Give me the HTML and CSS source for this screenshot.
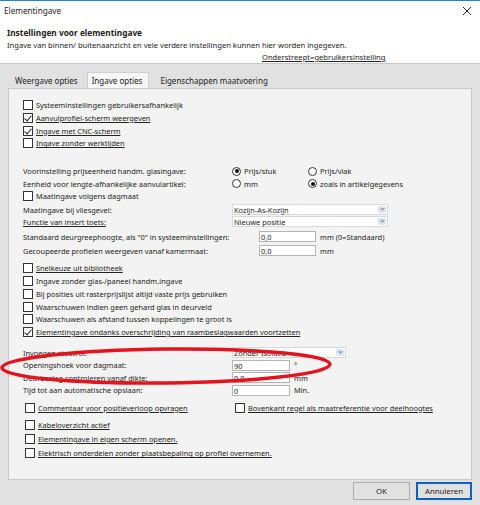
FILE: index.html
```html
<!DOCTYPE html>
<html lang="nl">

<head>
    <meta charset="UTF-8" />
    <title>Elementingave</title>
    <link rel="stylesheet" href="styles.css">
</head>

<body>
    <div class="dialog">
        <div class="titlebar">
            <span class="title">Elementingave</span>
            <svg class="close" width="10" height="10" viewBox="0 0 10 10">
                <path d="M1 1 L9 9 M9 1 L1 9" stroke="#222" stroke-width="1" fill="none" />
            </svg>
        </div>

        <div class="header">
            <div class="h-title">Instellingen voor elementingave</div>
            <div class="h-sub">Ingave van binnen/ buitenaanzicht en vele verdere instellingen kunnen hier worden ingegeven.</div>
            <div class="h-note"><span class="u">Onderstreept=gebruikersinstelling</span></div>
        </div>

        <div class="main">
            <div class="tabs">
                <div class="tab">Weergave opties</div>
                <div class="tab active">Ingave opties</div>
                <div class="tab">Eigenschappen maatvoering</div>
            </div>

            <div class="panel">
                <div class="group g1">
                    <label class="row"><span class="cb"></span>Systeeminstellingen gebruikersafhankelijk</label>
                    <label class="row"><span class="cb on"></span><span class="u">Aanvulprofiel-scherm weergeven</span></label>
                    <label class="row"><span class="cb on"></span><span class="u">Ingave met CNC-scherm</span></label>
                    <label class="row"><span class="cb"></span><span class="u">Ingave zonder werktijden</span></label>
                </div>

                <div class="group g2">
                    <div class="row">
                        <span class="lbl">Voorinstelling prijseenheid handm. glasingave:</span>
                        <span class="opt"><span class="rb on"></span>Prijs/stuk</span>
                        <span class="opt"><span class="rb"></span>Prijs/vlak</span>
                    </div>
                    <div class="row">
                        <span class="lbl">Eenheid voor lengte-afhankelijke aanvulartikel:</span>
                        <span class="opt"><span class="rb"></span>mm</span>
                        <span class="opt"><span class="rb on"></span>zoals in artikelgegevens</span>
                    </div>
                    <label class="row"><span class="cb"></span>Maatingave volgens dagmaat</label>
                    <div class="row sel-row first">
                        <span class="lbl">Maatingave bij vliesgevel:</span>
                        <span class="select wide">Kozijn-As-Kozijn<span class="arrow"></span></span>
                    </div>
                    <div class="row sel-row">
                        <span class="lbl u">Functie van insert toets:</span>
                        <span class="select wide">Nieuwe positie<span class="arrow"></span></span>
                    </div>
                </div>

                <div class="group g3">
                    <div class="row field">
                        <span class="lbl long">Standaard deurgreephoogte, als "0" in systeeminstellingen:</span>
                        <span class="input">0,0</span>
                        <span class="unit">mm (0=Standaard)</span>
                    </div>
                    <div class="row field">
                        <span class="lbl long">Gecoupeerde profielen weergeven vanaf kamermaat:</span>
                        <span class="input">0,0</span>
                        <span class="unit">mm</span>
                    </div>
                </div>

                <div class="group g4">
                    <label class="row"><span class="cb"></span><span class="u">Snelkeuze uit bibliotheek</span></label>
                    <label class="row"><span class="cb"></span>Ingave zonder glas-/paneel handm.ingave</label>
                    <label class="row"><span class="cb"></span>Bij posities uit rasterprijslijst altijd vaste prijs gebruiken</label>
                    <label class="row"><span class="cb"></span>Waarschuwen indien geen gehard glas in deurveld</label>
                    <label class="row"><span class="cb"></span>Waarschuwen als afstand tussen koppelingen te groot is</label>
                    <label class="row"><span class="cb on"></span><span class="u">Elementingave ondanks overschrijding van raambeslagwaarden voortzetten</span></label>
                </div>

                <div class="group g5">
                    <div class="row">
                        <span class="lbl">Invoegen stootrol:</span>
                        <span class="select mid">Zonder Isolatie<span class="arrow"></span></span>
                    </div>
                    <div class="row">
                        <span class="lbl">Openingshoek voor dagmaat:</span>
                        <span class="input short">90</span>
                        <span class="unit">°</span>
                    </div>
                    <div class="row">
                        <span class="lbl">Deurbeslag controleren vanaf dikte:</span>
                        <span class="input short">0,0</span>
                        <span class="unit">mm</span>
                    </div>
                    <div class="row">
                        <span class="lbl">Tijd tot aan automatische opslaan:</span>
                        <span class="input short">0</span>
                        <span class="unit">Min.</span>
                    </div>
                </div>

                <div class="group g6">
                    <div class="row two">
                        <label class="col"><span class="cb"></span><span class="u">Commentaar voor positieverloop opvragen</span></label>
                        <label class="col"><span class="cb"></span><span class="u">Bovenkant regel als maatreferentie voor deelhoogtes</span></label>
                    </div>
                    <label class="row"><span class="cb"></span><span class="u">Kabeloverzicht actief</span></label>
                    <label class="row"><span class="cb"></span><span class="u">Elementingave in eigen scherm openen.</span></label>
                    <label class="row"><span class="cb"></span><span class="u">Elektrisch onderdelen zonder plaatsbepaling op profiel overnemen.</span></label>
                </div>
            </div>

            <div class="buttons">
                <button class="btn">OK</button>
                <button class="btn default">Annuleren</button>
            </div>
        </div>

        <!-- rode markering -->
        <svg class="mark" width="340" height="50" viewBox="0 0 340 50">
            <ellipse cx="166" cy="24" rx="164" ry="17" fill="none" stroke="#e3141d" stroke-width="3.5" transform="rotate(-0.6 166 24)" />
        </svg>
    </div>
</body>

</html>
```

FILE: styles.css
```css
* {
    box-sizing: border-box;
}

body {
    margin: 0;
    font-family: 'Noto Sans', sans-serif;
    font-size: 7.4px;
    color: #222222;
}

.dialog {
    position: relative;
    width: 480px;
    height: 505px;
    overflow: hidden;
    background-color: #e1e1e1;
}

.u {
    text-decoration: underline;
}

/* title bar */
.titlebar {
    height: 22px;
    background-color: #ffffff;
    border-top: 1px solid #2a7fd6;
    display: flex;
    align-items: center;
    justify-content: space-between;
    padding: 0 8px 2px 4px;
    font-size: 8.2px;
}

/* header */
.header {
    height: 42px;
    background-color: #ffffff;
    border-bottom: 1px solid #c8c8c8;
    padding: 5px 0 0 7px;
}

.h-title {
    font-weight: 700;
    font-size: 8.3px;
    height: 12px;
    line-height: 12px;
}

.h-sub {
    font-size: 7.6px;
    height: 12px;
    line-height: 13px;
}

.h-note {
    padding-left: 255px;
    height: 12px;
    line-height: 13px;
    font-size: 7.6px;
}

/* tabs */
.main {
    padding: 8px 8px 0 8px;
}

.tabs {
    display: flex;
    height: 16px;
    padding-left: 3px;
    align-items: flex-end;
}

.tab {
    height: 14px;
    line-height: 13px;
    padding: 0 5px;
    font-size: 8px;
    margin-right: 1px;
}

.tab:first-child {
    padding-left: 4px;
    margin-right: 4px;
}

.tab.active {
    height: 16px;
    line-height: 15px;
    background-color: #f7f7f7;
    border: 1px solid #d0d0d0;
    border-bottom: none;
    margin-right: 6px;
    padding: 0 6px 0 4px;
}

/* panel */
.panel {
    height: 392px;
    background-color: #f3f3f3;
    border: 1px solid #c9c9c9;
    padding: 10px 0 0 14px;
}

.row {
    display: flex;
    align-items: center;
    height: 12.7px;
    white-space: nowrap;
}

.lbl {
    width: 209px;
    flex-shrink: 0;
}

.lbl.long {
    width: 236px;
}

.opt {
    display: flex;
    align-items: center;
    width: 76px;
    flex-shrink: 0;
}

.cb {
    width: 10px;
    height: 10px;
    border: 1px solid #333333;
    background-color: #ffffff;
    margin-right: 3px;
    flex-shrink: 0;
    position: relative;
}

.cb.on::after {
    content: "";
    position: absolute;
    left: 2px;
    top: 0px;
    width: 3px;
    height: 6px;
    border-right: 1px solid #222;
    border-bottom: 1px solid #222;
    transform: rotate(40deg);
}

.rb {
    width: 9px;
    height: 9px;
    border: 1px solid #333333;
    border-radius: 50%;
    background-color: #ffffff;
    margin-right: 3px;
    position: relative;
    flex-shrink: 0;
}

.rb.on::after {
    content: "";
    position: absolute;
    left: 1.5px;
    top: 1.5px;
    width: 4px;
    height: 4px;
    border-radius: 50%;
    background-color: #111;
}

.select {
    position: relative;
    height: 11px;
    line-height: 10px;
    background-color: #ffffff;
    border: 1px solid #d8d8d8;
    padding-left: 1px;
    flex-shrink: 0;
}

.select.wide {
    width: 156px;
}

.select.mid {
    width: 114px;
}

.arrow {
    position: absolute;
    right: 1px;
    top: 1px;
    width: 8px;
    height: 7px;
    background-color: #dde4ee;
    border-radius: 2px;
}

.arrow::after {
    content: "";
    position: absolute;
    left: 2.5px;
    top: 1px;
    width: 2px;
    height: 2px;
    border-right: 1px solid #6d8bb3;
    border-bottom: 1px solid #6d8bb3;
    transform: rotate(45deg);
}

.input {
    height: 11px;
    line-height: 10px;
    width: 57px;
    background-color: #ffffff;
    border: 1px solid #b4b4b4;
    padding-left: 1px;
    margin-right: 4px;
    flex-shrink: 0;
}

.input.short {
    width: 58px;
}

.g2 {
    margin-top: 15px;
}

.sel-row.first {
    margin-top: 1px;
}

.sel-row {
    height: 12px;
}

.g3 {
    margin-top: 2px;
}

.field {
    height: 14px;
}

.g4 {
    margin-top: 4px;
}

.g4 .row {
    height: 12.8px;
}

.g5 {
    margin-top: 8px;
}

.g5 .row {
    height: 12.5px;
}

.g6 {
    margin-top: 3px;
    padding-left: 2px;
}

.g6 .row {
    height: 14.3px;
}

.g6 .row.two {
    height: 16px;
    margin-bottom: 2px;
}

.col {
    display: flex;
    align-items: center;
    width: 210px;
}

/* buttons */
.buttons {
    display: flex;
    justify-content: flex-end;
    gap: 6px;
    padding-top: 2px;
}

.btn {
    width: 57px;
    height: 18px;
    font-family: 'Noto Sans', sans-serif;
    font-size: 7.8px;
    color: #1e1e1e;
    background-color: #e1e1e1;
    border: 1px solid #adadad;
    padding: 0;
}

.btn.default {
    width: 56px;
    border: 2px solid #0a62c4;
}

/* red annotation */
.mark {
    position: absolute;
    left: 0;
    top: 342px;
}
```
